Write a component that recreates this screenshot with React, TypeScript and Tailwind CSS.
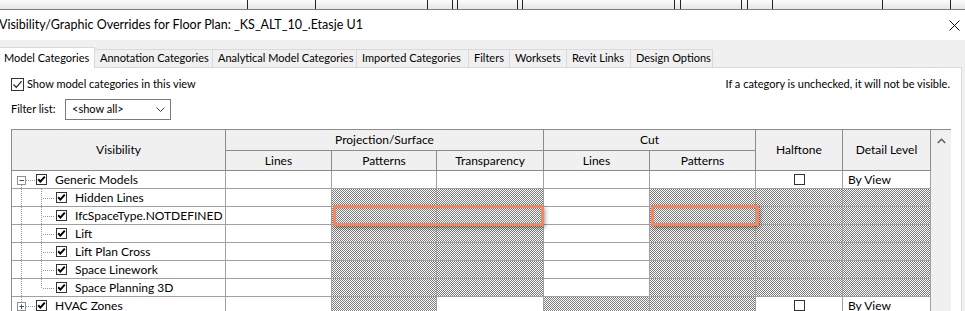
import React from "react";

const HATCH =
  "bg-[image:repeating-conic-gradient(#7a7a7a_0_25%,#ffffff_0_50%)] bg-[length:2px_2px]";

function TreeCheck() {
  return (
    <span className="w-[11px] h-[11px] border border-[#333333] bg-white flex items-center justify-center shrink-0">
      <svg width="9" height="9" viewBox="0 0 9 9">
        <path d="M1.2 4.2 L3.4 6.6 L7.8 1.6" stroke="#000" strokeWidth="2" fill="none" />
      </svg>
    </span>
  );
}

function EmptyCheck() {
  return <span className="w-[11px] h-[11px] border border-[#333333] bg-white block" />;
}

type Kind = "parentOpen" | "child" | "lastChild" | "parentClosed";

function TreeLines({ kind }: { kind: Kind }) {
  const dot = { stroke: "#9a9a9a", strokeWidth: 1, strokeDasharray: "1 1" };
  return (
    <svg className="absolute left-0 top-0" width="60" height="18" viewBox="0 0 60 18">
      {kind === "parentOpen" && (
        <>
          <line x1="9.5" y1="14" x2="9.5" y2="18" {...dot} />
          <line x1="14" y1="9.5" x2="23" y2="9.5" {...dot} />
          <line x1="29.5" y1="17" x2="29.5" y2="18" {...dot} />
          <rect x="5.5" y="5.5" width="8" height="8" fill="#fff" stroke="#8f8f8f" />
          <line x1="7.5" y1="9.5" x2="12" y2="9.5" stroke="#2f4f86" />
        </>
      )}
      {(kind === "child" || kind === "lastChild") && (
        <>
          <line x1="9.5" y1="0" x2="9.5" y2="18" {...dot} />
          <line x1="29.5" y1="0" x2="29.5" y2={kind === "child" ? 18 : 9} {...dot} />
          <line x1="31" y1="9.5" x2="43" y2="9.5" {...dot} />
        </>
      )}
      {kind === "parentClosed" && (
        <>
          <line x1="9.5" y1="0" x2="9.5" y2="5" {...dot} />
          <line x1="14" y1="9.5" x2="23" y2="9.5" {...dot} />
          <rect x="5.5" y="5.5" width="8" height="8" fill="#fff" stroke="#8f8f8f" />
          <line x1="7.5" y1="9.5" x2="12" y2="9.5" stroke="#2f4f86" />
          <line x1="9.5" y1="7.5" x2="9.5" y2="12" stroke="#2f4f86" />
        </>
      )}
    </svg>
  );
}

type Row = {
  label: string;
  kind: Kind;
  hatch: boolean[];
  extras: boolean;
};

const childHatch = [false, true, true, false, true, true, true];

const rows: Row[] = [
  { label: "Generic Models", kind: "parentOpen", hatch: [false, false, false, false, false, false, false], extras: true },
  { label: "Hidden Lines", kind: "child", hatch: childHatch, extras: false },
  { label: "IfcSpaceType.NOTDEFINED", kind: "child", hatch: childHatch, extras: false },
  { label: "Lift", kind: "child", hatch: childHatch, extras: false },
  { label: "Lift Plan Cross", kind: "child", hatch: childHatch, extras: false },
  { label: "Space Linework", kind: "child", hatch: childHatch, extras: false },
  { label: "Space Planning 3D", kind: "lastChild", hatch: childHatch, extras: false },
  { label: "HVAC Zones", kind: "parentClosed", hatch: [false, true, false, true, true, false, false], extras: true },
];

const colW = [
  "w-[106px]",
  "w-[105px]",
  "w-[107px]",
  "w-[106px]",
  "w-[106px]",
  "w-[87px]",
  "w-[88px]",
];

function DataRow({ row }: { row: Row }) {
  const isParent = row.kind === "parentOpen" || row.kind === "parentClosed";
  return (
    <div className="flex h-[18px] shrink-0">
      <div className="relative w-[214px] h-[18px] border-b border-r border-[#a0a0a0] flex items-center">
        <TreeLines kind={row.kind} />
        <div className={`relative flex items-center ${isParent ? "pl-[24px]" : "pl-[44px]"}`}>
          <TreeCheck />
          <span className="ml-[8px] text-[12px] leading-none text-black whitespace-nowrap">{row.label}</span>
        </div>
      </div>
      {row.hatch.map((h, i) => (
        <div
          key={i}
          className={`${colW[i]} h-[18px] border-b border-r border-[#a0a0a0] flex items-center ${
            h ? HATCH : "bg-white"
          } ${i === 5 ? "justify-center" : ""}`}
        >
          {!h && row.extras && i === 5 && <EmptyCheck />}
          {!h && row.extras && i === 6 && (
            <span className="pl-[5px] text-[12px] leading-none text-black whitespace-nowrap">By View</span>
          )}
        </div>
      ))}
    </div>
  );
}

export default function App() {
  return (
    <div className="relative w-[965px] h-[311px] overflow-hidden bg-[#f0f0f0] font-['Lato','Noto_Sans',sans-serif] text-black">
      {/* background app strip */}
      <div className="flex h-[10px] bg-gradient-to-b from-[#fbfbfb] to-[#e6e6e6] border-b border-[#7f7f7f]">
        <div className="w-[248px] border-r border-[#222]" />
        <div className="w-[68px] border-r border-[#222]" />
        <div className="w-[112px] border-r border-[#222]" />
        <div className="w-[25px] border-r border-[#222]" />
        <div className="w-[5px] border-r border-[#222]" />
        <div className="w-[60px] border-r border-[#222]" />
        <div className="w-[5px] border-r border-[#222]" />
        <div className="w-[152px] border-r border-[#222]" />
        <div className="w-[6px] border-r border-[#222]" />
        <div className="w-[61px] border-r border-[#222]" />
        <div className="w-[6px] border-r border-[#222]" />
        <div className="w-[25px] border-r border-[#222]" />
        <div className="w-[110px] border-r border-[#222]" />
        <div className="w-[68px] border-r border-[#222]" />
      </div>

      {/* title bar */}
      <div className="h-[30px] bg-white flex items-center justify-between">
        <span className="ml-[-1px] text-[12.5px] whitespace-nowrap">
          Visibility/Graphic Overrides for Floor Plan: _KS_ALT_10_.Etasje U1
        </span>
        <svg className="mr-[5px]" width="11" height="11" viewBox="0 0 11 11">
          <path d="M0.5 0.5 L10.5 10.5 M10.5 0.5 L0.5 10.5" stroke="#111" strokeWidth="1" />
        </svg>
      </div>

      {/* tabs */}
      <div className="h-[27px] flex items-end pt-[7px]">
        <div className="w-[95px] h-[21px] bg-white border-t border-r border-[#d9d9d9] relative z-10 -mb-px flex items-center pl-[4px] text-[11px] whitespace-nowrap">
          Model Categories
        </div>
        {[
          ["Annotation Categories", "w-[118px]"],
          ["Analytical Model Categories", "w-[144px]"],
          ["Imported Categories", "w-[112px]"],
          ["Filters", "w-[41px]"],
          ["Worksets", "w-[57px]"],
          ["Revit Links", "w-[64px]"],
          ["Design Options", "w-[82px]"],
        ].map(([t, w]) => (
          <div
            key={t}
            className={`${w} h-[18px] border-t border-r border-[#d9d9d9] bg-[#f0f0f0] flex items-center pl-[5px] text-[11px] whitespace-nowrap overflow-hidden`}
          >
            {t}
          </div>
        ))}
      </div>

      {/* panel */}
      <div className="w-[962px] h-[300px] bg-white border-t border-r border-[#d9d9d9]">
        <div className="flex items-center justify-between h-[14px] mt-[9px] pl-[11px] pr-[11px]">
          <div className="flex items-center">
            <span className="w-[13px] h-[13px] border border-[#333] bg-white flex items-center justify-center">
              <svg width="11" height="11" viewBox="0 0 11 11">
                <path d="M1.5 5.5 L4.3 8.3 L9.6 2.2" stroke="#222" strokeWidth="1.2" fill="none" />
              </svg>
            </span>
            <span className="ml-[3px] text-[11px] whitespace-nowrap">Show model categories in this view</span>
          </div>
          <span className="text-[11px] whitespace-nowrap">If a category is unchecked, it will not be visible.</span>
        </div>

        <div className="flex items-center mt-[8px] pl-[11px] h-[21px]">
          <span className="w-[54px] text-[11px] whitespace-nowrap">Filter list:</span>
          <div className="w-[106px] h-[21px] border border-[#7a7a7a] bg-white flex items-center justify-between pl-[6px] pr-[5px]">
            <span className="text-[11px] whitespace-nowrap">&lt;show all&gt;</span>
            <svg width="9" height="6" viewBox="0 0 9 6">
              <path d="M0.5 0.5 L4.5 4.5 L8.5 0.5" stroke="#444" strokeWidth="1" fill="none" />
            </svg>
          </div>
        </div>

        {/* table */}
        <div className="flex mt-[9px] ml-[11px]">
          <div className="flex flex-col border-l border-t border-[#8c8c8c]">
            {/* header */}
            <div className="flex h-[41px] bg-[#f0f0f0] text-[12px]">
              <div className="w-[214px] h-[41px] border-b border-r border-[#8c8c8c] flex items-center justify-center">
                Visibility
              </div>
              <div className="flex flex-col">
                <div className="h-[21px] border-b border-r border-[#8c8c8c] flex items-center justify-center">
                  Projection/Surface
                </div>
                <div className="flex h-[20px]">
                  <div className="w-[106px] border-b border-r border-[#8c8c8c] flex items-center justify-center">Lines</div>
                  <div className="w-[105px] border-b border-r border-[#8c8c8c] flex items-center justify-center">Patterns</div>
                  <div className="w-[107px] border-b border-r border-[#8c8c8c] flex items-center justify-center">Transparency</div>
                </div>
              </div>
              <div className="flex flex-col">
                <div className="h-[21px] border-b border-r border-[#8c8c8c] flex items-center justify-center">Cut</div>
                <div className="flex h-[20px]">
                  <div className="w-[106px] border-b border-r border-[#8c8c8c] flex items-center justify-center">Lines</div>
                  <div className="w-[106px] border-b border-r border-[#8c8c8c] flex items-center justify-center">Patterns</div>
                </div>
              </div>
              <div className="w-[87px] h-[41px] border-b border-r border-[#8c8c8c] flex items-center justify-center">
                Halftone
              </div>
              <div className="w-[88px] h-[41px] border-b border-r border-[#8c8c8c] flex items-center justify-center">
                Detail Level
              </div>
            </div>
            {rows.map((r) => (
              <DataRow key={r.label} row={r} />
            ))}
          </div>
          {/* scrollbar */}
          <div className="w-[20px] h-[200px] border-t border-[#8c8c8c] bg-[#f0f0f0] flex justify-center pt-[8px]">
            <svg width="9" height="6" viewBox="0 0 9 6">
              <path d="M0.8 5 L4.5 1.3 L8.2 5" stroke="#606060" strokeWidth="1.6" fill="none" />
            </svg>
          </div>
        </div>
      </div>

      {/* highlight overlays */}
      <div className="absolute left-[333px] top-[205px] w-[211px] h-[21px] rounded-[2px] shadow-[inset_0_0_0_3px_#f4875f,inset_0_3px_3px_rgba(0,0,0,0.25),1px_2px_4px_rgba(0,0,0,0.4)] z-20" />
      <div className="absolute left-[651px] top-[205px] w-[108px] h-[21px] rounded-[2px] shadow-[inset_0_0_0_3px_#f4875f,inset_0_3px_3px_rgba(0,0,0,0.25),1px_2px_4px_rgba(0,0,0,0.4)] z-20" />
    </div>
  );
}
